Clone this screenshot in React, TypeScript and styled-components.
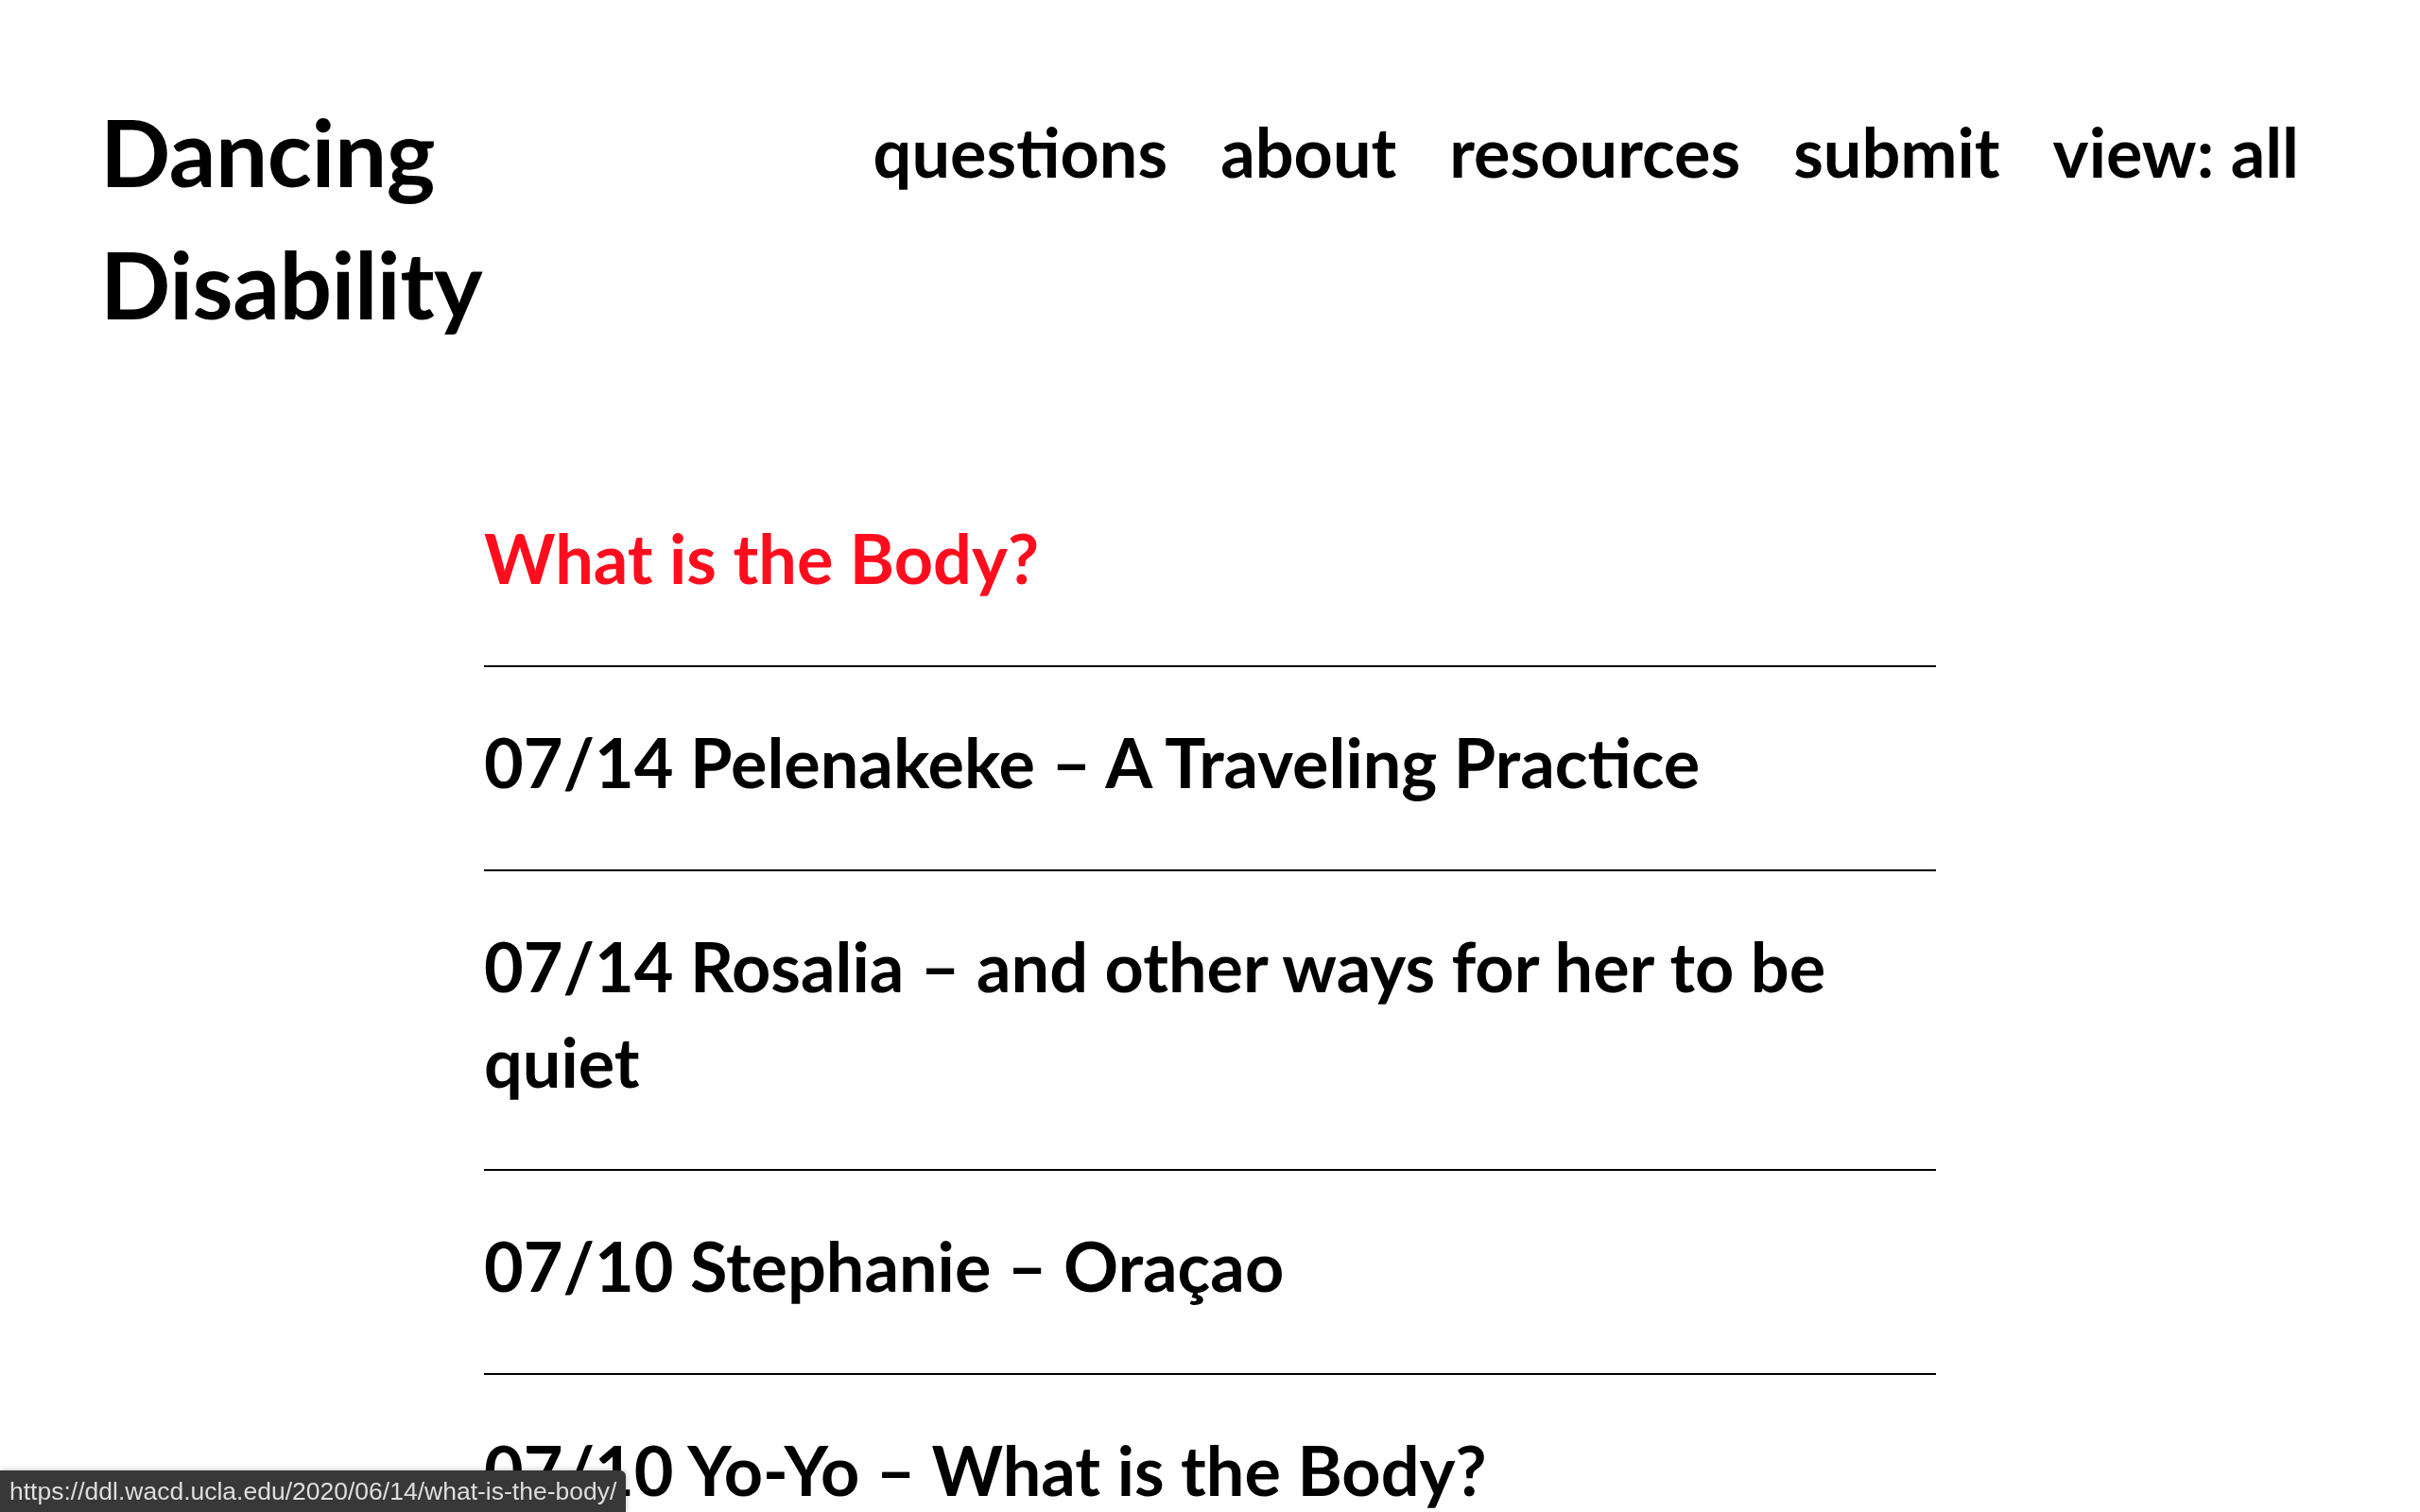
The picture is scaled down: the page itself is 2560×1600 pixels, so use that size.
import * as React from 'react';
import styled, {createGlobalStyle} from 'styled-components';

const GlobalStyle = createGlobalStyle`
  html, body {
    margin: 0;
    padding: 0;
    background: #fff;
  }
  body {
    font-family: Lato, "Noto Sans", "DejaVu Sans", sans-serif;
    color: #000;
  }
  a {
    color: inherit;
    text-decoration: none;
  }
`;

const Header = styled.header`
  display: flex;
  justify-content: space-between;
  align-items: flex-start;
  padding: 90px 128px 0 106px;
`;

const SiteTitle = styled.h1`
  margin: 0;
  font-size: 98px;
  line-height: 140px;
  font-weight: 700;
  letter-spacing: -0.5px;
`;

const Nav = styled.nav`
  display: flex;
  gap: 56px;
  padding-top: 20px;
`;

const NavLink = styled.a`
  font-size: 72px;
  line-height: 100px;
  font-weight: 700;
`;

const Main = styled.main`
  width: 60%;
  margin: 0 auto;
  padding-top: 170px;
`;

const Row = styled.div<{ $active?: boolean }>`
  padding: ${p => (p.$active ? '0' : '50px')} 0 63px;
  border-bottom: 2px solid #000;
  font-size: 72px;
  line-height: 101px;
  font-weight: 700;
  color: ${p => (p.$active ? '#ff0d1e' : '#000')};
`;

const StatusBar = styled.div`
  position: fixed;
  left: 0;
  bottom: 0;
  height: 44px;
  padding: 0 10px;
  display: flex;
  align-items: center;
  background: #383838;
  border-top-right-radius: 6px;
  box-shadow: 0 0 6px rgba(0, 0, 0, 0.25);
  color: #dedede;
  font-family: "Liberation Sans", Arial, sans-serif;
  font-size: 26.5px;
`;

const navItems = ['questions', 'about', 'resources', 'submit', 'view: all'];

const posts = [
  '07/14 Pelenakeke – A Traveling Practice',
  '07/14 Rosalia – and other ways for her to be quiet',
  '07/10 Stephanie – Oraçao',
  '07/10 Yo-Yo – What is the Body?',
  '07/08 Raquel – Body Archive',
];

function App() {
  return (
    <>
      <GlobalStyle/>
      <Header>
        <SiteTitle>Dancing<br/>Disability</SiteTitle>
        <Nav>
          {navItems.map(item => <NavLink key={item} href="#">{item}</NavLink>)}
        </Nav>
      </Header>
      <Main>
        <Row $active>What is the Body?</Row>
        {posts.map(p => <Row key={p}>{p}</Row>)}
      </Main>
      <StatusBar>https://ddl.wacd.ucla.edu/2020/06/14/what-is-the-body/</StatusBar>
    </>
  );
}

export default App;
